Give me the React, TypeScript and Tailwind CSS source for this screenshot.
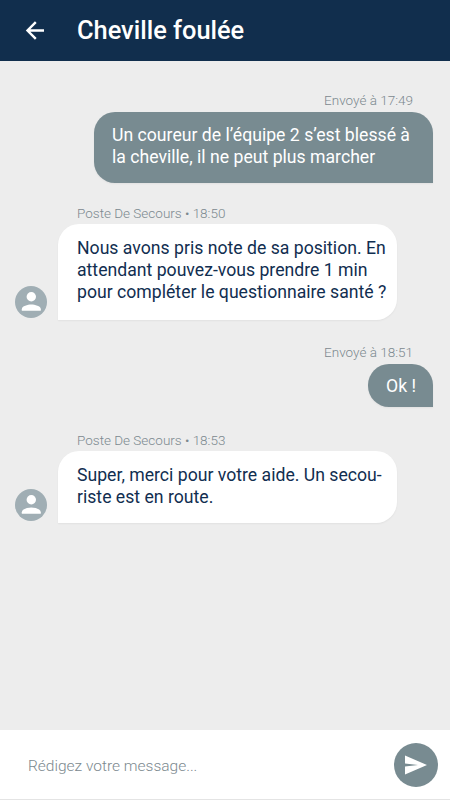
import React from 'react';

interface Message {
    id: number;
    meta: string;
    lines: string[];
    sent: boolean;
    rowClass: string;
    bubbleClass: string;
}

const messages: Message[] = [
    {
        id: 1,
        meta: 'Envoyé à 17:49',
        lines: ['Un coureur de l’équipe 2 s’est blessé à', 'la cheville, il ne peut plus marcher'],
        sent: true,
        rowClass: 'mt-[30px]',
        bubbleClass: 'w-[339px] h-[71px] pt-3',
    },
    {
        id: 2,
        meta: 'Poste De Secours • 18:50',
        lines: ['Nous avons pris note de sa position. En', 'attendant pouvez-vous prendre 1 min', 'pour compléter le questionnaire santé ?'],
        sent: false,
        rowClass: 'mt-[21px]',
        bubbleClass: 'w-[339px] h-[96px] pt-[13px]',
    },
    {
        id: 3,
        meta: 'Envoyé à 18:51',
        lines: ['Ok !'],
        sent: true,
        rowClass: 'mt-[23px]',
        bubbleClass: 'w-[65px] h-[43px] pt-[11px]',
    },
    {
        id: 4,
        meta: 'Poste De Secours • 18:53',
        lines: ['Super, merci pour votre aide. Un secou-', 'riste est en route.'],
        sent: false,
        rowClass: 'mt-[24px]',
        bubbleClass: 'w-[339px] h-[72px] pt-[13px]',
    },
];

const Avatar = () => (
    <div className="mb-0.5 flex size-8 shrink-0 items-center justify-center rounded-full bg-[#a0aeb4]">
        <svg width="20" height="20" viewBox="0 0 20 20" fill="#ffffff">
            <circle cx="10.300" cy="4.800" r="4.700" />
            <path d="M.8 18.800v-1.600c0-3.200 6-4.700 9.500-4.700s9.500 1.500 9.500 4.700v1.600z" />
        </svg>
    </div>
);

const ChatMessage: React.FC<{ message: Message }> = ({ message }) => {
    const { meta, lines, sent, rowClass, bubbleClass } = message;

    return (
        <div className={`flex flex-col ${sent ? 'items-end' : 'items-start'} ${rowClass}`}>
            <span className={`text-[13.5px] leading-[18px] font-light whitespace-nowrap text-[#7c898f] ${sent ? 'mr-[37px] mb-[3px]' : 'ml-[77px] mb-0.5'}`}>
                {meta}
            </span>
            <div className={`flex items-end ${sent ? 'mr-[17px]' : 'ml-[15px] gap-[11px]'}`}>
                {!sent && <Avatar />}
                <div
                    className={`rounded-[21px] text-[17.65px] leading-[22px] whitespace-nowrap shadow-xs ${bubbleClass} ${sent
                            ? 'rounded-br-none bg-[#788b91] pl-[18px] text-white'
                            : 'rounded-bl-none bg-white pl-[19px] text-[#112e50]'
                        }`}
                >
                    {lines.map((line) => (
                        <p key={line}>{line}</p>
                    ))}
                </div>
            </div>
        </div>
    );
};

export default function App() {
    return (
        <div className="flex h-[800px] w-[450px] flex-col overflow-hidden bg-[#ededed] font-['Roboto',sans-serif]">
            <header className="flex h-[61px] shrink-0 items-center bg-[#112e4d] pl-[23px] text-white">
                <button aria-label="Retour">
                    <svg width="24" height="24" viewBox="0 0 24 24" fill="none" stroke="currentColor" strokeWidth="2.4">
                        <path d="M21 11.500H4.500M12.800 3.200 4.500 11.500l8.300 8.300" />
                    </svg>
                </button>
                <h1 className="ml-[30px] text-[25.4px] font-medium">Cheville foulée</h1>
            </header>

            <main className="flex-1">
                {messages.map((message) => (
                    <ChatMessage key={message.id} message={message} />
                ))}
            </main>

            <footer className="flex h-[70px] shrink-0 items-center border-b border-[#e4e4e4] bg-white pr-3 pl-7">
                <span className="mt-[5px] flex-1 text-[15.5px] font-light text-[#7c898f]">Rédigez votre message...</span>
                <button aria-label="Envoyer" className="flex size-11 items-center justify-center rounded-full bg-[#788b91]">
                    <svg width="22" height="20" viewBox="0 0 22 20" fill="#ffffff">
                        <path d="M0 .5 22 10 0 19.500v-7.900L13 10 0 8.400z" />
                    </svg>
                </button>
            </footer>
        </div>
    );
}
